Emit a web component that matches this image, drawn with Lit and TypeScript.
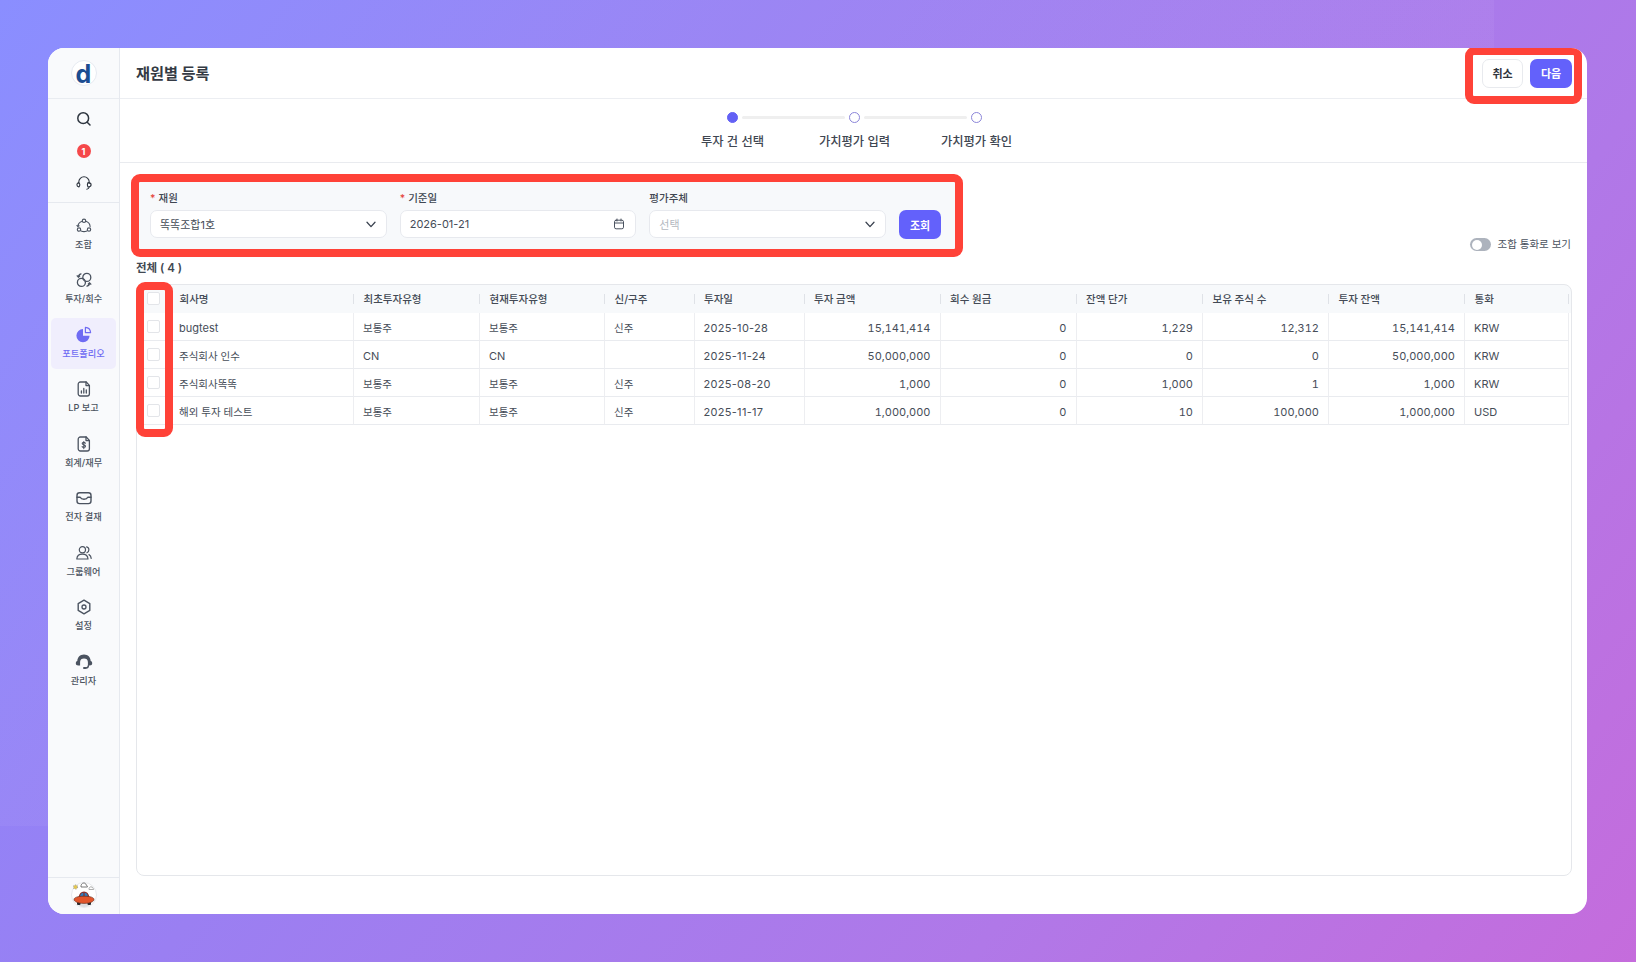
import { LitElement, html, css, svg } from "lit";
import { customElement } from "lit/decorators.js";

const ic = (body: unknown, size = 18) => html`<svg class="ic" width=${size} height=${size} viewBox="0 0 18 18" fill="none" stroke="currentColor" stroke-width="1.3" stroke-linecap="round" stroke-linejoin="round">${body}</svg>`;

const icons: Record<string, unknown> = {
  search: svg`<circle cx="8.2" cy="8.2" r="5.4" stroke-width="1.5"/><path d="M12.2 12.2 15 15" stroke-width="1.5"/>`,
  headset: svg`<path d="M3.800 9.200V8a5.200 5.200 0 0 1 10.400 0v1.200" stroke-width="1.100"/><path d="M3.800 8.600C2.500 8.900 1.900 9.800 1.900 10.800s.7 2 1.900 2.200c.7-.6 1-1.300 1-2.200s-.3-1.600-1-2.200z" stroke-width="1.100"/><path d="M13 8.600c1.900.1 3.100 1 3.100 2.200s-1.200 2.100-3.100 2.200c-.4-.6-.6-1.300-.6-2.200s.2-1.600.6-2.200z" fill="none" stroke-width="1.100"/><path d="M14.200 13c-.2 1.300-1.100 2-2.400 2.200" stroke-width="1.100"/>`,
  fund: svg`<circle cx="9" cy="3.800" r="1.700" stroke-width="1.100"/><circle cx="4" cy="12.600" r="1.700" stroke-width="1.100"/><circle cx="14" cy="12.600" r="1.700" stroke-width="1.100"/><path d="M7.100 4.200C4.700 5 3 7 2.900 9.600M2.900 9.600l-1-1.100M2.900 9.600l1.200-.8" stroke-width="1.100"/><path d="M10.900 4.200c2.400.8 4.100 2.800 4.200 5.400" stroke-width="1.100"/><path d="M6.200 14c1.900.8 3.700.8 5.600 0" stroke-width="1.100"/>`,
  invest: svg`<circle cx="6.400" cy="11.400" r="4"/><circle cx="11.800" cy="6.400" r="4"/><path d="M3.400 6.200c0-1.800 1-3 2.600-3.400M3.400 6.200 2.200 4.800M3.400 6.200l1.300-1.100"/><path d="M14.600 11.800c0 1.800-1 3-2.600 3.400M14.600 11.800l1.200 1.400M14.600 11.800l-1.300 1.100"/>`,
  portfolio: svg`<path d="M8 3a6.600 6.600 0 1 0 6.600 6.800H8z" fill="currentColor" stroke="none"/><path d="M10.400 1.400c2.900.2 5 2.400 5.200 5.200h-5.200z" fill="#f0eefd" stroke-width="1.200"/>`,
  report: svg`<path d="M5.400 2h5.800l3.200 3.400v8.400a2.200 2.200 0 0 1-2.200 2.200H5.400a2.200 2.200 0 0 1-2.200-2.200V4.200A2.200 2.200 0 0 1 5.400 2z"/><path d="M11 2v3.600h3.400"/><path d="M6.400 13v-2M8.800 13V8.400M11.300 13v-3"/>`,
  account: svg`<path d="M5.400 2h5.800l3.200 3.400v8.400a2.200 2.200 0 0 1-2.200 2.200H5.400a2.200 2.200 0 0 1-2.200-2.200V4.200A2.200 2.200 0 0 1 5.400 2z"/><path d="M11 2v3.600h3.400"/><path d="M10.400 8.200c-.4-.6-1-.8-1.600-.8-.9 0-1.600.5-1.600 1.200 0 1.700 3.300.9 3.300 2.700 0 .8-.8 1.200-1.700 1.200-.7 0-1.300-.3-1.700-.9M8.800 6.600v7" stroke-width="1.100"/>`,
  approve: svg`<rect x="2" y="3.800" width="14" height="10.800" rx="2.600" stroke-width="1.400"/><path d="M2 8.200h3.200c.6 1.300 2 2 3.800 2s3.200-.7 3.800-2H16" stroke-width="1.400"/>`,
  group: svg`<circle cx="7.400" cy="5.800" r="3.100" stroke-width="1.200"/><path d="M1.800 15c.2-2.900 2.600-4.800 5.600-4.800s5.400 1.900 5.600 4.800z" stroke-width="1.200"/><path d="M11.600 2.800c1.400.3 2.300 1.500 2.300 3s-.8 2.500-2 2.900" stroke-width="1.200"/><path d="M14 10.600c1.300.7 2.100 2.200 2.200 3.800" stroke-width="1.200"/>`,
  settings: svg`<path d="M9 2.200 14.800 5.600v6.800L9 15.800 3.200 12.400V5.600z" stroke-width="1.400"/><circle cx="9" cy="9" r="2" stroke-width="1.300"/>`,
  admin: svg`<path d="M9 1.600C5 1.600 2.500 4.400 2.300 8 1.300 8.300.8 9.200.8 10.200c0 1.300.9 2.300 2.400 2.300h1.900V9c0-2.300 1.700-3.400 3.900-3.400S12.900 6.700 12.900 9v3.500h1.900c1.500 0 2.400-1 2.400-2.300 0-1-.5-1.900-1.500-2.200C15.500 4.400 13 1.600 9 1.600z" fill="currentColor" stroke="none"/><path d="M13.400 12.600c-.1 1.500-1 2.300-2.400 2.400" stroke-width="1.400"/><rect x="8" y="14" width="3.400" height="2" rx="1" fill="currentColor" stroke="none"/>`,
};

const chevron = html`<svg class="chev" width="10" height="7" viewBox="0 0 10 7" fill="none" stroke="#3b4350" stroke-width="1.300" stroke-linecap="round" stroke-linejoin="round"><path d="M1 1.200 5 5.600 9 1.200"/></svg>`;
const calendar = html`<svg width="12" height="12" viewBox="0 0 12 12" fill="none" stroke="#4b5360" stroke-width="1" stroke-linecap="round"><rect x="1.500" y="2.200" width="9" height="8.600" rx="1.600"/><path d="M1.500 5h9M4 1v2M8 1v2"/></svg>`;

const NAV = [
  { icon: "fund", label: "조합" },
  { icon: "invest", label: "투자/회수" },
  { icon: "portfolio", label: "포트폴리오", active: true },
  { icon: "report", label: "LP 보고" },
  { icon: "account", label: "회계/재무" },
  { icon: "approve", label: "전자 결재" },
  { icon: "group", label: "그룹웨어" },
  { icon: "settings", label: "설정" },
  { icon: "admin", label: "관리자" },
];

const COLS = [
  { w: 33, label: "" },
  { w: 184, label: "회사명" },
  { w: 126, label: "최초투자유형" },
  { w: 125, label: "현재투자유형" },
  { w: 89.5, label: "신/구주" },
  { w: 110, label: "투자일" },
  { w: 136, label: "투자 금액", num: true },
  { w: 136, label: "회수 원금", num: true },
  { w: 126.5, label: "잔액 단가", num: true },
  { w: 126, label: "보유 주식 수", num: true },
  { w: 136, label: "투자 잔액", num: true },
  { w: 104, label: "통화" },
];

const ROWS = [
  ["bugtest", "보통주", "보통주", "신주", "2025-10-28", "15,141,414", "0", "1,229", "12,312", "15,141,414", "KRW"],
  ["주식회사 인수", "CN", "CN", "", "2025-11-24", "50,000,000", "0", "0", "0", "50,000,000", "KRW"],
  ["주식회사똑똑", "보통주", "보통주", "신주", "2025-08-20", "1,000", "0", "1,000", "1", "1,000", "KRW"],
  ["해외 투자 테스트", "보통주", "보통주", "신주", "2025-11-17", "1,000,000", "0", "10", "100,000", "1,000,000", "USD"],
];

const STEPS = ["투자 건 선택", "가치평가 입력", "가치평가 확인"];

@customElement("app-root")
export class AppRoot extends LitElement {
  static styles = css`
    :host {
      display: block;
      width: 1636px;
      height: 962px;
      overflow: hidden;
      box-sizing: border-box;
      padding: 48px 49px 48px 48px;
      font-family: Inter, "Noto Sans CJK KR", "Noto Sans", sans-serif;
      color: #3f4752;
      background:
        linear-gradient(rgba(255, 255, 255, 0.045), rgba(255, 255, 255, 0.045)) 0 0 / 1494px 826px no-repeat,
        linear-gradient(128deg, #8589ff 0%, #9a7ff2 38%, #b078e8 72%, #c56cdc 100%);
    }
    * { box-sizing: border-box; }
    .window {
      position: relative;
      display: flex;
      height: 866px;
      border-radius: 16px;
      overflow: hidden;
      background: #fff;
    }

    .sidebar {
      flex: 0 0 72px;
      display: flex;
      flex-direction: column;
      align-items: center;
      background: #f9fafc;
      border-right: 1px solid #e6e9ef;
      color: #2f3640;
    }
    .logo-wrap {
      flex: 0 0 51px;
      width: 100%;
      display: flex;
      align-items: center;
      justify-content: center;
      border-bottom: 1px solid #e9ecf1;
    }
    .logo {
      width: 26px;
      height: 26px;
      border-radius: 50%;
      background: #fff;
      border: 1px solid #e6eaf1;
      display: flex;
      align-items: center;
      justify-content: center;
      padding-top: 3px;
      font-size: 25px;
      font-weight: 700;
      line-height: 1;
      color: #1c4d91;
    }
    .tools {
      width: 100%;
      padding: 4px 0 3px;
      border-bottom: 1px solid #e6e9ef;
      display: flex;
      flex-direction: column;
      align-items: center;
    }
    .tool { height: 32px; display: flex; align-items: center; justify-content: center; }
    .badge {
      width: 14px;
      height: 14px;
      border-radius: 50%;
      background: #f5484a;
      color: #fff;
      font-size: 9px;
      font-weight: 700;
      display: flex;
      align-items: center;
      justify-content: center;
    }
    .nav {
      display: flex;
      flex-direction: column;
      gap: 3.5px;
      padding-top: 5.5px;
    }
    .nav-item {
      width: 65px;
      height: 51px;
      border-radius: 5px;
      padding-top: 8px;
      display: flex;
      flex-direction: column;
      align-items: center;
      gap: 4px;
      font-size: 9.200px;
      line-height: 12px;
      font-weight: 500;
      color: #4b5360;
    }
    .nav-item.active { background: #f0eefd; color: #6f6bf3; }
    .ic { display: block; }
    .side-bottom {
      margin-top: auto;
      width: 100%;
      height: 37px;
      border-top: 1px solid #e6e9ef;
      display: flex;
      justify-content: center;
      padding-top: 1px;
    }

    .main { flex: 1; min-width: 0; display: flex; flex-direction: column; }
    .topbar {
      flex: 0 0 51px;
      display: flex;
      align-items: center;
      justify-content: space-between;
      padding: 0 15px 0 16px;
      border-bottom: 1px solid #eceef2;
    }
    .title { padding-bottom: 2px; font-size: 15.200px; font-weight: 700; color: #343a44; }
    .btns { display: flex; gap: 7px; }
    .btn {
      height: 29px;
      padding: 0 0 1px;
      width: 42px;
      display: flex;
      align-items: center;
      justify-content: center;
      border-radius: 7px;
      font-size: 11px;
      font-weight: 700;
    }
    .btn.ghost { background: #fff; border: 1px solid #e8eaee; color: #30353d; width: 41px; }
    .btn.primary { background: #6361fb; color: #fff; }

    .stepper {
      flex: 0 0 64px;
      display: flex;
      justify-content: center;
      padding: 13px 0 0 2px;
      border-bottom: 1px solid #e9ebef;
    }
    .step {
      position: relative;
      width: 122px;
      display: flex;
      flex-direction: column;
      align-items: center;
      gap: 10px;
      font-size: 12.300px;
      font-weight: 500;
      line-height: 18px;
      color: #3f4752;
    }
    .dot {
      width: 11px;
      height: 11px;
      border-radius: 50%;
      border: 1.500px solid #8b85d9;
      background: #fff;
    }
    .step.on .dot { background: #6361f5; border-color: #6361f5; }
    .step:not(:last-child)::after {
      content: "";
      position: absolute;
      left: calc(50% + 9px);
      top: 4px;
      width: 103px;
      height: 3px;
      background: #efefef;
      border-radius: 2px;
    }

    .content {
      flex: 1;
      min-height: 0;
      display: flex;
      flex-direction: column;
      padding: 15px 15px 38px 16px;
    }
    .filter-row { display: flex; justify-content: space-between; align-items: flex-end; }
    .filter {
      width: 822px;
      height: 74px;
      background: #f7f9fb;
      display: flex;
      align-items: flex-end;
      gap: 13px;
      padding: 0 17px 14px 14px;
    }
    .field { width: 237px; display: flex; flex-direction: column; gap: 4px; }
    .field-label { font-size: 10.500px; line-height: 14px; font-weight: 500; color: #3f4752; }
    .req { color: #e5483f; margin-right: 3px; }
    .input {
      height: 28px;
      border: 1px solid #e7e9ee;
      border-radius: 7px;
      background: #fff;
      display: flex;
      align-items: center;
      justify-content: space-between;
      padding: 0 10px 0 9px;
      font-size: 11px;
      color: #454c57;
    }
    .input.empty { color: #b4b8bf; }
    .search-btn {
      width: 42px;
      height: 29px;
      flex: none;
      margin-bottom: -1px;
      background: #6361fb;
      color: #fff;
      border-radius: 7px;
      display: flex;
      align-items: center;
      justify-content: center;
      font-size: 11px;
      font-weight: 700;
    }
    .toggle-wrap {
      display: flex;
      align-items: center;
      gap: 6px;
      margin: 0 1px -1px 0;
      font-size: 10.500px;
      line-height: 16px;
      color: #4b5360;
    }
    .toggle { width: 21px; height: 13px; margin-bottom: 1px; border-radius: 7px; background: #adb3bd; padding: 1.500px; }
    .knob { width: 10px; height: 10px; border-radius: 50%; background: #fff; }
    .count { margin: 7px 0; font-size: 11.500px; line-height: 18px; font-weight: 600; color: #414852; }

    .table-wrap {
      flex: 1;
      min-height: 0;
      border: 1px solid #e5e7eb;
      border-radius: 8px;
      overflow: hidden;
      background: linear-gradient(#f7f9fb, #f7f9fb) 0 0 / 100% 28px no-repeat;
    }
    table { width: 1432px; table-layout: fixed; border-collapse: separate; border-spacing: 0; }
    th, td {
      height: 28px;
      padding: 0 9px 0 9px;
      font-size: 10.500px;
      text-align: left;
      white-space: nowrap;
      overflow: hidden;
    }
    th {
      position: relative;
      padding-bottom: 1px;
      padding-left: 9.500px;
      font-weight: 500;
      color: #434a55;
    }
    th:not(:first-child)::after {
      content: "";
      position: absolute;
      right: 0;
      top: 9px;
      width: 1px;
      height: 10px;
      background: #dfe2e7;
    }
    td {
      padding-top: 1px;
      border-bottom: 1px solid #e9ebef;
      border-right: 1px solid #edeef1;
      color: #464d58;
    }
    td.num { padding-top: 2px; text-align: right; font-size: 11px; font-variant-numeric: tabular-nums; }
    td.mono { padding-top: 2px; font-size: 11px; }
    td.date { padding-top: 2px; font-size: 11px; letter-spacing: 0.3px; }
    th:first-child, td:first-child { padding: 0 0 0 10px; border-right: none; }
    th:first-child { padding-bottom: 1px; }
    .check {
      display: block;
      width: 13px;
      height: 13px;
      border: 1.500px solid #e3e5e9;
      border-radius: 2px;
      background: #fff;
    }

    .mark {
      position: absolute;
      border: 8px solid #ff4238;
      border-radius: 9px;
      pointer-events: none;
    }
    .mark.top { left: 1417px; top: -1px; width: 117px; height: 57px; }
    .mark.form { left: 83px; top: 126px; width: 832px; height: 83px; }
    .mark.boxes { left: 88px; top: 234px; width: 37px; height: 155px; }
  `;

  private cell(value: string, i: number) {
    const c = COLS[i + 1];
    let cls = "";
    if (c.num) cls = "num";
    else if (/^\d{4}-\d{2}-\d{2}$/.test(value)) cls = "date";
    else if (/^(KRW|USD|CN|bugtest)$/.test(value)) cls = "mono";
    return html`<td class=${cls}>${value}</td>`;
  }

  render() {
    return html`
      <div class="window">
        <aside class="sidebar">
          <div class="logo-wrap"><div class="logo">d</div></div>
          <div class="tools">
            <div class="tool">${ic(icons.search)}</div>
            <div class="tool"><div class="badge">1</div></div>
            <div class="tool">${ic(icons.headset)}</div>
          </div>
          <nav class="nav">
            ${NAV.map(
              (n) => html`<div class="nav-item ${n.active ? "active" : ""}">${ic(icons[n.icon])}<span>${n.label}</span></div>`
            )}
          </nav>
          <div class="side-bottom">
            <svg width="30" height="30" viewBox="0 0 30 30">
              <circle cx="15" cy="16" r="12.500" fill="#fff" stroke="#e6e8ec"/>
              <circle cx="6.500" cy="8" r="2" fill="#e8c94a" stroke="#a8a8a0" stroke-width="1.200" stroke-dasharray="1 1"/>
              <path d="M12 8c-.3-2 .9-4 2.800-4 1.400 0 2.300 1 2.400 2.200.8.100 1.300.9 1.200 1.800z" fill="#fff" stroke="#555" stroke-width=".8"/>
              <path d="M20 10.500c-.2-1.500.8-2.700 2-2.700 1 0 1.700.6 1.800 1.400.6.100.9.700.8 1.300z" fill="#fff" stroke="#999" stroke-width=".8"/>
              <path d="M8 23.500h14c-.6 2.800-3.300 4.500-7 4.500s-6.400-1.700-7-4.500z" fill="#dcdde1"/>
              <rect x="8" y="23" width="3.500" height="3" rx="1" fill="#2b2b2f"/>
              <rect x="18.500" y="23" width="3.500" height="3" rx="1" fill="#2b2b2f"/>
              <path d="M9.500 18.500c.5-4 2.700-6 5.500-6s5 2 5.500 6z" fill="#8c2f26"/>
              <path d="M11 17.500c.3-2.300 1.600-3.700 3.400-3.700v3.700zM15.600 13.800c1.800 0 3.100 1.400 3.400 3.700h-3.400z" fill="#2f7fc0"/>
              <path d="M5 20.500c0-2 3.500-3.300 10-3.300s10 1.300 10 3.300-3.500 3.900-10 3.900-10-1.900-10-3.900z" fill="#e2552b" stroke="#5a2a1e" stroke-width=".6"/>
            </svg>
          </div>
        </aside>

        <div class="main">
          <header class="topbar">
            <div class="title">재원별 등록</div>
            <div class="btns">
              <div class="btn ghost">취소</div>
              <div class="btn primary">다음</div>
            </div>
          </header>

          <div class="stepper">
            ${STEPS.map(
              (s, i) => html`<div class="step ${i === 0 ? "on" : ""}"><div class="dot"></div><div>${s}</div></div>`
            )}
          </div>

          <div class="content">
            <div class="filter-row">
              <div class="filter">
                <div class="field">
                  <div class="field-label"><span class="req">*</span>재원</div>
                  <div class="input"><span>똑똑조합1호</span>${chevron}</div>
                </div>
                <div class="field">
                  <div class="field-label"><span class="req">*</span>기준일</div>
                  <div class="input"><span>2026-01-21</span>${calendar}</div>
                </div>
                <div class="field">
                  <div class="field-label">평가주체</div>
                  <div class="input empty"><span>선택</span>${chevron}</div>
                </div>
                <div class="search-btn">조회</div>
              </div>
              <div class="toggle-wrap">
                <div class="toggle"><div class="knob"></div></div>
                <span>조합 통화로 보기</span>
              </div>
            </div>

            <div class="count">전체 ( 4 )</div>

            <div class="table-wrap">
              <table>
                <colgroup>${COLS.map((c) => html`<col style="width:${c.w}px" />`)}</colgroup>
                <thead>
                  <tr>
                    ${COLS.map(
                      (c, i) => html`<th>${i === 0 ? html`<span class="check"></span>` : c.label}</th>`
                    )}
                  </tr>
                </thead>
                <tbody>
                  ${ROWS.map(
                    (r) => html`<tr>
                      <td><span class="check"></span></td>
                      ${r.map((v, i) => this.cell(v, i))}
                    </tr>`
                  )}
                </tbody>
              </table>
            </div>
          </div>
        </div>

        <div class="mark top"></div>
        <div class="mark form"></div>
        <div class="mark boxes"></div>
      </div>
    `;
  }
}
